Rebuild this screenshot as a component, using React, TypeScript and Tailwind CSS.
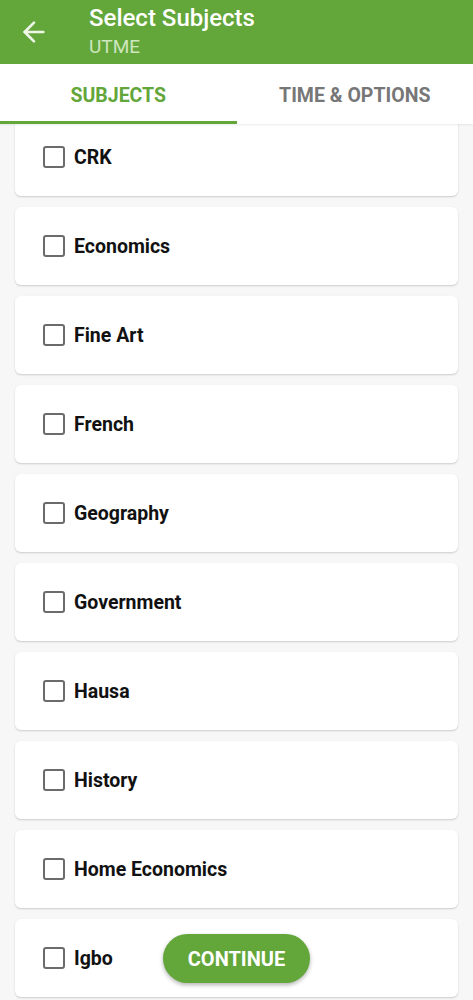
import { ArrowLeft } from "lucide-react";

const subjects = [
  "CRK",
  "Economics",
  "Fine Art",
  "French",
  "Geography",
  "Government",
  "Hausa",
  "History",
  "Home Economics",
  "Igbo",
];

const SubjectCard = ({ name }: { name: string }) => (
  <div className="mx-[15px] h-[78px] shrink-0 flex items-center rounded-md bg-white shadow-[0_1px_2px_rgba(0,0,0,0.18)]">
    <span className="ml-[28px] w-[22px] h-[22px] rounded-[3px] border-2 border-[#6b6b6b] bg-white" />
    <span className="ml-[9px] mt-[2px] text-[19.5px] font-bold text-[#111]">{name}</span>
  </div>
);

export default function App() {
  return (
    <div className="w-[473px] h-[1000px] flex flex-col overflow-hidden bg-[#f7f7f7] font-['Roboto',sans-serif]">
      <header className="h-[64px] shrink-0 bg-[#63a63a] flex items-center">
        <ArrowLeft className="ml-[18px] w-[32px] h-[32px] text-[#eef6e8]" strokeWidth={2} />
        <div className="ml-[39px] flex flex-col leading-none">
          <span className="text-[24px] font-medium text-white mt-[-3px]">Select Subjects</span>
          <span className="text-[19px] text-[#cfe6bf] mt-[7px]">UTME</span>
        </div>
      </header>

      <nav className="h-[60px] shrink-0 flex bg-white relative z-10 shadow-[0_1px_2px_rgba(0,0,0,0.08)]">
        <div className="w-1/2 flex items-center justify-center border-b-[3px] border-[#63a63a] text-[19.5px] font-bold text-[#63a63a] pt-[6px]">
          SUBJECTS
        </div>
        <div className="w-1/2 flex items-center justify-center text-[19.5px] font-bold text-[#777] pt-[4px]">
          TIME &amp; OPTIONS
        </div>
      </nav>

      <main className="relative flex-1 overflow-hidden">
        <div className="mt-[-6px] flex flex-col gap-[11px]">
          {subjects.map((s) => (
            <SubjectCard key={s} name={s} />
          ))}
        </div>
        <button className="absolute left-[163px] top-[810px] w-[147px] h-[49px] rounded-full bg-[#63a63a] text-white text-[20px] font-bold shadow-[0_2px_4px_rgba(0,0,0,0.3)]">
          CONTINUE
        </button>
      </main>
    </div>
  );
}
